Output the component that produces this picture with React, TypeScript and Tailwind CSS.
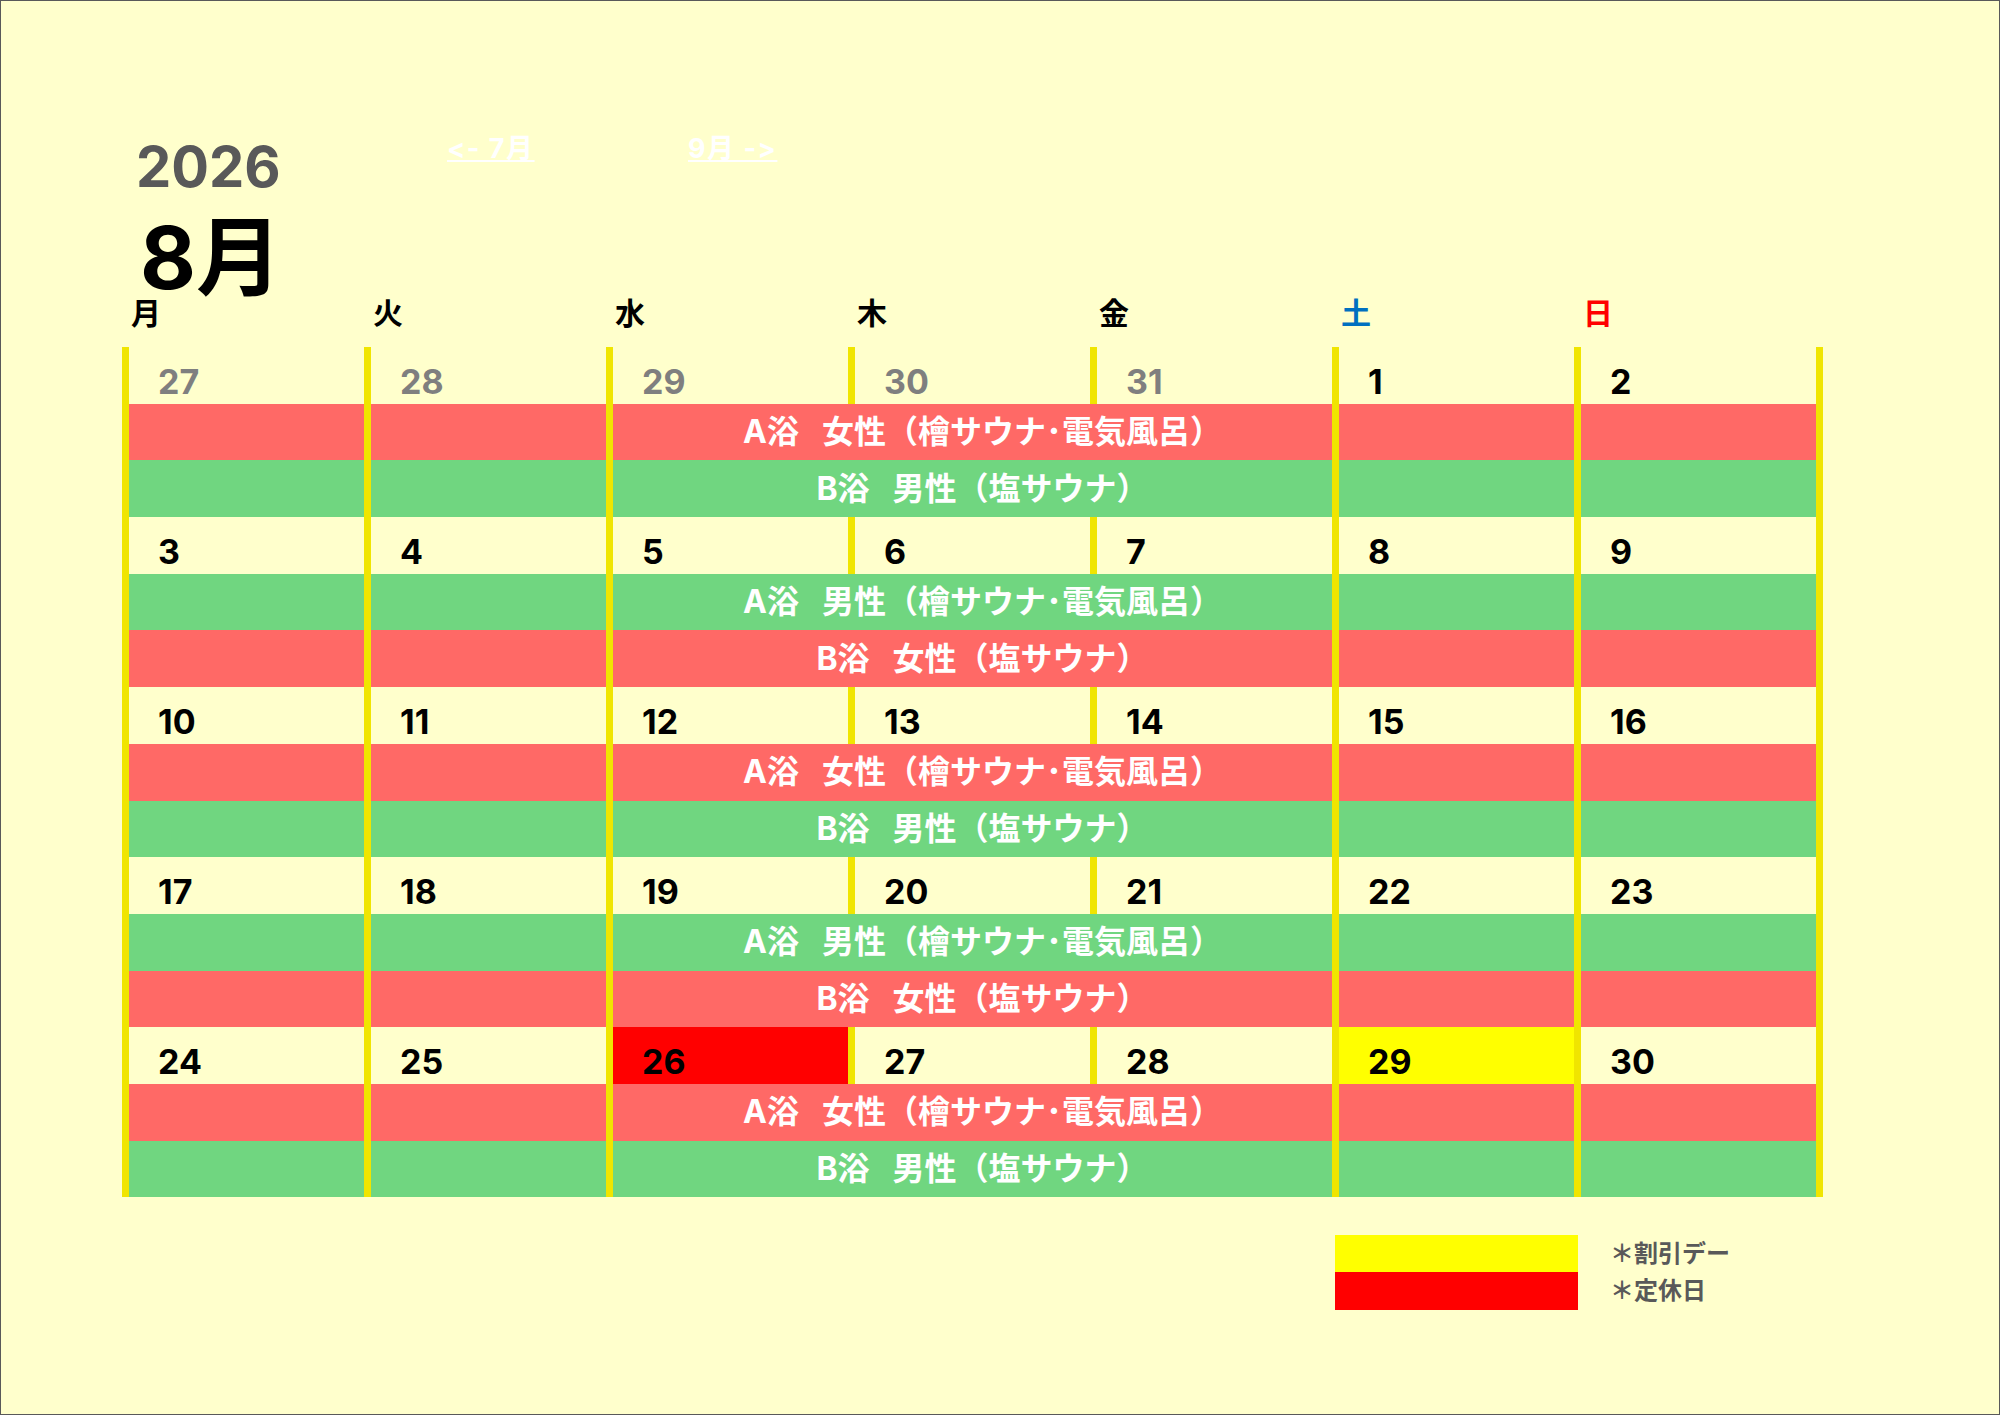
import React from "react";

type Day = { n: number; gray?: boolean; bg?: string };
type Band = { color: "red" | "green"; bath: string; rest: string };

const FONT = { fontFamily: '"Inter", "Noto Sans CJK JP", sans-serif' };

const pattern1: Band[] = [
  { color: "red", bath: "A浴", rest: "女性（檜サウナ･電気風呂）" },
  { color: "green", bath: "B浴", rest: "男性（塩サウナ）" },
];
const pattern2: Band[] = [
  { color: "green", bath: "A浴", rest: "男性（檜サウナ･電気風呂）" },
  { color: "red", bath: "B浴", rest: "女性（塩サウナ）" },
];

const range = (a: number, b: number) => Array.from({ length: b - a + 1 }, (_, i) => a + i);

const weeks: { days: Day[]; bands: Band[] }[] = [
  {
    days: [
      ...[27, 28, 29, 30, 31].map((n) => ({ n, gray: true })),
      { n: 1 },
      { n: 2 },
    ],
    bands: pattern1,
  },
  { days: range(3, 9).map((n) => ({ n })), bands: pattern2 },
  { days: range(10, 16).map((n) => ({ n })), bands: pattern1 },
  { days: range(17, 23).map((n) => ({ n })), bands: pattern2 },
  {
    days: range(24, 30).map((n) => ({
      n,
      bg: n === 26 ? "red" : n === 29 ? "yellow" : undefined,
    })),
    bands: pattern1,
  },
];

const WEEKDAYS = [
  { label: "月", cls: "text-black" },
  { label: "火", cls: "text-black" },
  { label: "水", cls: "text-black" },
  { label: "木", cls: "text-black" },
  { label: "金", cls: "text-black" },
  { label: "土", cls: "text-[#0070C0]" },
  { label: "日", cls: "text-[#FF0000]" },
];

function DateCell({ day }: { day: Day }) {
  const bg = day.bg === "red" ? "bg-[#FF0000]" : day.bg === "yellow" ? "bg-[#FFFF00]" : "";
  const color = day.gray ? "text-[#7F7F7F]" : "text-black";
  return (
    <div className={`h-[56.7px] border-l-[7px] border-[#F0E500] flex items-end pb-[5px] pl-[29px] ${bg}`}>
      <span className={`text-[34px] leading-none font-bold ${color}`}>{day.n}</span>
    </div>
  );
}

function BandRow({ band }: { band: Band }) {
  const bg = band.color === "red" ? "bg-[#FF6966]" : "bg-[#70D680]";
  return (
    <>
      <div className={`h-[56.7px] border-l-[7px] border-[#F0E500] ${bg}`} />
      <div className={`h-[56.7px] border-l-[7px] border-[#F0E500] ${bg}`} />
      <div className={`col-span-3 h-[56.7px] border-l-[7px] border-[#F0E500] flex items-center justify-center pl-[20px] ${bg}`}>
        <span className="text-[32px] leading-none font-bold text-white whitespace-nowrap">
          {band.bath}
          <span className="inline-block w-[23px]" />
          {band.rest}
        </span>
      </div>
      <div className={`h-[56.7px] border-l-[7px] border-[#F0E500] ${bg}`} />
      <div className={`h-[56.7px] border-l-[7px] border-[#F0E500] ${bg}`} />
    </>
  );
}

export default function App() {
  return (
    <div
      className="w-[2000px] h-[1415px] border border-[#595959] bg-[#FFFFCC] pl-[121px] pt-[132px]"
      style={FONT}
    >
      {/* year + month navigation */}
      <div className="flex items-start">
        <div className="w-[325px]">
          <div className="ml-[14px] mt-[6px] text-[56px] leading-none font-bold text-[#595959]">2026</div>
        </div>
        <div className="flex mt-[2px] text-[27px] leading-none font-bold tracking-[1.5px] text-white [font-feature-settings:'calt'_0]">
          <a className="w-[241px] underline">&lt;- 7月</a>
          <a className="underline">9月 -&gt;</a>
        </div>
      </div>

      <div className="ml-[18px] mt-[27px] text-[86px] leading-[72px] font-bold text-black">8月</div>

      {/* weekday header */}
      <div className="mt-[4px] grid grid-cols-[repeat(7,242px)]">
        {WEEKDAYS.map((w) => (
          <div key={w.label} className={`pl-[9px] text-[30px] leading-none font-bold ${w.cls}`}>
            {w.label}
          </div>
        ))}
      </div>

      {/* calendar grid */}
      <div className="mt-[19px] w-fit border-r-[7px] border-[#F0E500]">
        {weeks.map((week, i) => (
          <div key={i} className="grid grid-cols-[repeat(7,242px)]">
            {week.days.map((d) => (
              <DateCell key={d.n} day={d} />
            ))}
            {week.bands.map((b, j) => (
              <BandRow key={j} band={b} />
            ))}
          </div>
        ))}
      </div>

      {/* legend */}
      <div className="ml-[1213px] mt-[37.5px] flex flex-col">
        <div className="flex items-center">
          <div className="w-[243px] h-[37.5px] bg-[#FFFF00]" />
          <span className="ml-[32px] text-[24px] leading-none font-bold text-[#595959]">＊割引デー</span>
        </div>
        <div className="flex items-center">
          <div className="w-[243px] h-[37.5px] bg-[#FF0000]" />
          <span className="ml-[32px] text-[24px] leading-none font-bold text-[#595959]">＊定休日</span>
        </div>
      </div>
    </div>
  );
}
